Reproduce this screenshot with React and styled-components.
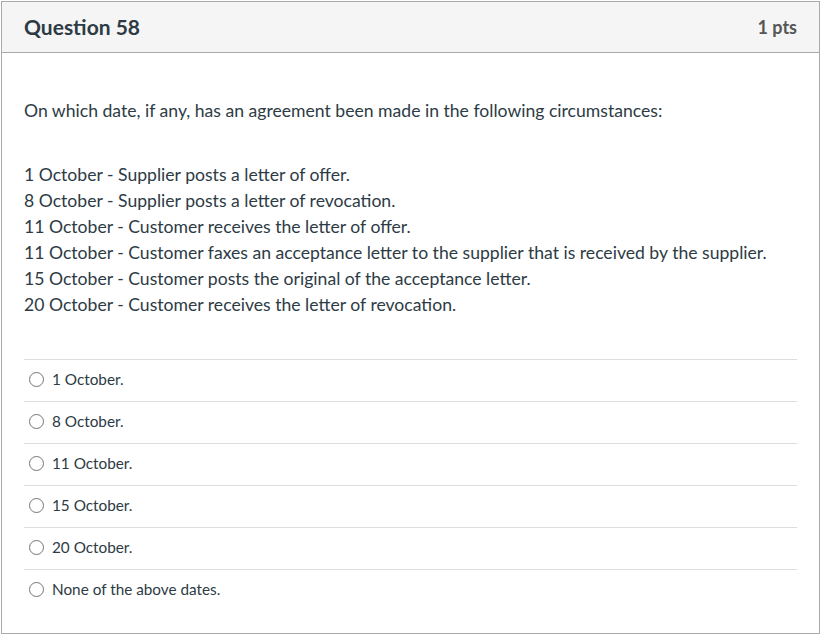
import React from "react";
import styled, { createGlobalStyle } from "styled-components";

const GlobalStyle = createGlobalStyle`
  body {
    margin: 0;
    background: #ffffff;
    font-family: Lato, "Noto Sans", sans-serif;
  }
`;

const Panel = styled.section`
  margin: 1px 1px 0 1px;
  width: 817px;
  border: 1px solid #aaaaaa;
  background: #ffffff;
`;

const Header = styled.header`
  display: flex;
  justify-content: space-between;
  align-items: center;
  height: 50px;
  padding: 0 22px 0 22px;
  background: #f5f5f5;
  border-bottom: 1px solid #aaaaaa;
`;

const Title = styled.h2`
  margin: 0 0 2px 0;
  font-size: 21px;
  font-weight: 700;
  color: #2d3b45;
`;

const Points = styled.span`
  font-size: 18px;
  font-weight: 700;
  color: #565656;
`;

const Body = styled.div`
  padding: 45px 22px 22px 22px;
`;

const Text = styled.p`
  margin: 0 0 38px 0;
  font-size: 17.6px;
  line-height: 26px;
  color: #2d3b45;
`;

const Lines = styled.div`
  font-size: 17.6px;
  line-height: 26px;
  color: #2d3b45;
  margin-bottom: 41px;
`;

const Answers = styled.div`
  display: flex;
  flex-direction: column;
`;

const Answer = styled.label`
  display: flex;
  align-items: center;
  gap: 8px;
  box-sizing: border-box;
  height: 42px;
  padding: 0 0 4px 5px;
  border-top: 1px solid #dddddd;
  font-size: 15.3px;
  color: #2d3b45;
  cursor: pointer;
`;

const Radio = styled.span`
  width: 13px;
  height: 13px;
  border-radius: 50%;
  border: 1px solid #767676;
  flex-shrink: 0;
  margin-top: 1px;
`;

const events = [
  "1 October - Supplier posts a letter of offer.",
  "8 October - Supplier posts a letter of revocation.",
  "11 October - Customer receives the letter of offer.",
  "11 October - Customer faxes an acceptance letter to the supplier that is received by the supplier.",
  "15 October - Customer posts the original of the acceptance letter.",
  "20 October - Customer receives the letter of revocation.",
];

const options = [
  "1 October.",
  "8 October.",
  "11 October.",
  "15 October.",
  "20 October.",
  "None of the above dates.",
];

const App = () => {
  return (
    <>
      <GlobalStyle />
      <Panel>
        <Header>
          <Title>Question 58</Title>
          <Points>1 pts</Points>
        </Header>
        <Body>
          <Text>
            On which date, if any, has an agreement been made in the following
            circumstances:
          </Text>
          <Lines>
            {events.map((line) => (
              <div key={line}>{line}</div>
            ))}
          </Lines>
          <Answers>
            {options.map((opt) => (
              <Answer key={opt}>
                <Radio />
                {opt}
              </Answer>
            ))}
          </Answers>
        </Body>
      </Panel>
    </>
  );
};

export default App;
